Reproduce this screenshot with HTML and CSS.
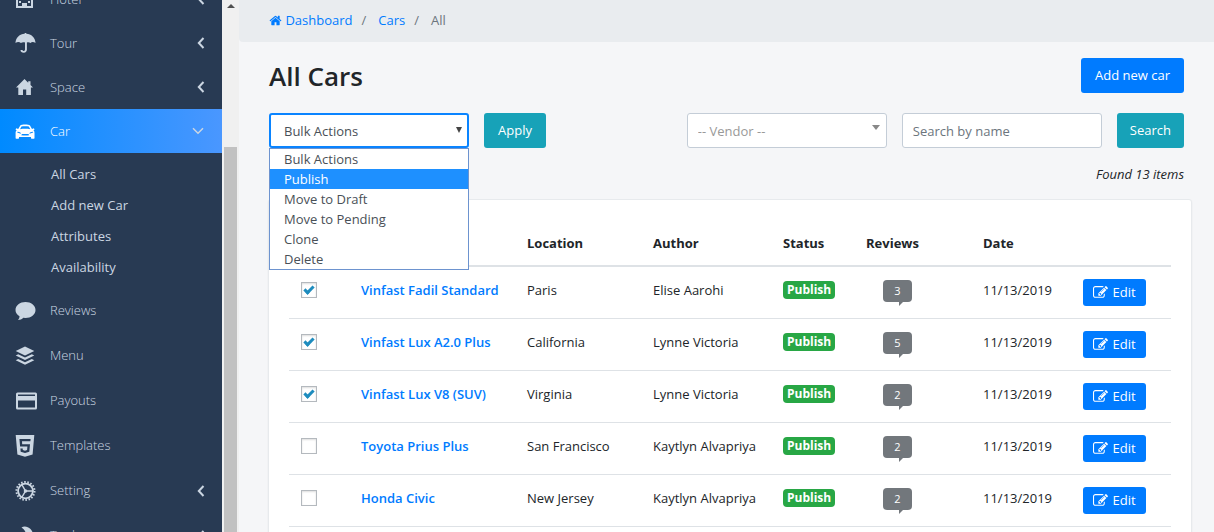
FILE: index.html
```html
<!DOCTYPE html>
<html lang="en">
<head>
<meta charset="utf-8">
<title>All Cars</title>
<link rel="stylesheet" href="styles.css">
</head>
<body>
<svg class="sprite" aria-hidden="true">
  <symbol id="home-fa" viewBox="0 0 1792 1792"><path d="M1472 992v480q0 26-19 45t-45 19h-384v-384h-256v384h-384q-26 0-45-19t-19-45v-480q0-1 .5-3t.5-3l575-474 575 474q1 2 1 6zm223-69l-62 74q-8 9-21 11h-3q-13 0-21-7l-692-577-692 577q-12 8-24 7-13-2-21-11l-62-74q-8-10-7-23.500t11-21.500l719-599q32-26 76-26t76 26l244 204v-195q0-14 9-23t23-9h192q14 0 23 9t9 23v408l219 182q10 8 11 21.500t-7 23.500z"/></symbol>
  <symbol id="edit" viewBox="0 0 1792 1792"><path d="M888 1184l116-116-152-152-116 116v56h96v96h56zm440-720q-16-16-33 1l-350 350q-17 17-1 33t33-1l350-350q17-17 1-33zm80 594v190q0 119-84.500 203.500t-203.500 84.500h-832q-119 0-203.500-84.500t-84.500-203.500v-832q0-119 84.500-203.500t203.500-84.500h832q63 0 117 25 15 7 18 23 3 17-9 29l-49 49q-14 14-32 8-23-6-45-6h-832q-66 0-113 47t-47 113v832q0 66 47 113t113 47h832q66 0 113-47t47-113v-126q0-13 9-22l64-64q15-15 35-7t20 29zm-96-738l288 288-672 672h-288v-288zm444 132l-92 92-288-288 92-92q28-28 68-28t68 28l152 152q28 28 28 68t-28 68z"/></symbol>
  <symbol id="left" viewBox="0 0 8 12"><path d="M6.500 1 1.800 6l4.700 5" fill="none" stroke="currentColor" stroke-width="2"/></symbol>
  <symbol id="down" viewBox="0 0 12 8"><path d="M1 1.300 6 6.300l5-5" fill="none" stroke="currentColor" stroke-width="1.500"/></symbol>
</svg>
<div class="app">
  <nav class="sidebar" aria-label="Main menu">
    <ul class="menu">
      <li><a class="item" href="#"><svg class="icon" viewBox="0 0 22 22"><path fill-rule="evenodd" d="M1 2h17v18H1zM3 4v14h4v-3h5v3h4V4zM4 6h2v2H4zm3 0h2v2H7zm3 0h2v2h-2zm3 0h2v2h-2zM4 9h2v2H4zm3 0h2v2H7zm3 0h2v2h-2zm3 0h2v2h-2zM4 13h2v2H4zm9 0h2v2h-2z"/></svg><span>Hotel</span><svg class="left"><use href="#left"/></svg></a></li>
      <li><a class="item" href="#"><svg class="icon" viewBox="0 0 22 22"><path d="M.5 11C.7 5.500 4.700 2 9.700 1.700V1h1.600v.7c5 .3 9 3.800 9.200 9.300-1.800-1.500-3.800-1.500-5 0-1-.9-2.200-1.100-3.600-.6v7.200c0 2-1.200 3.200-3.100 3.200-2 0-3.300-1.100-3.300-2.800h2c.1.700.6 1 1.300 1 .8 0 1.200-.5 1.200-1.400v-7.200c-1.600-.5-3-.3-4.100.6-1.400-1.500-3.700-1.500-5.400 0z"/></svg><span>Tour</span><svg class="left"><use href="#left"/></svg></a></li>
      <li><a class="item" href="#"><svg class="icon" viewBox="0 0 22 22"><path d="M9.500 3 1 11.500h2.300V19H8v-5.500h3.200V19h4.700v-7.500H18L15.500 9V5.200h-2.300v1.500z"/></svg><span>Space</span><svg class="left"><use href="#left"/></svg></a></li>
      <li>
        <a class="item current" href="#" aria-current="page"><svg class="icon" viewBox="0 0 22 22"><path fill-rule="evenodd" d="M5.300 5.400C6.500 4.300 13.500 4.300 15 5.400L17 9l1.800-.7.8 1.200-1.200.7c.9.800 1.100 1.400 1.100 3V18c0 .5-.2.7-.6.700h-2.200c-.5 0-.7-.3-.7-.8v-1H4v1c0 .5-.2.800-.7.800H1.200c-.4 0-.6-.2-.6-.7v-4.800c0-1.600.2-2.200 1.100-3L.5 9.500l.8-1.200L3.200 9zM5 9.200c3-.5 7-.5 10.300 0L13.800 6.500c-2-.5-5.500-.5-7.300 0zM2.200 12.500l3.600 1.200c.4-1.100-.7-1.800-3.300-2zm16 0-3.700 1.200c-.3-1.100.8-1.800 3.400-2zM6.200 15.200c2.500.5 5.500.5 8 0l-.8-1.200H7z"/></svg><span>Car</span><svg class="down"><use href="#down"/></svg></a>
        <ul class="submenu">
          <li><a href="#">All Cars</a></li>
          <li><a href="#">Add new Car</a></li>
          <li><a href="#">Attributes</a></li>
          <li><a href="#">Availability</a></li>
        </ul>
      </li>
      <li><a class="item tall" href="#"><svg class="icon" viewBox="0 0 22 22"><path d="M10.500 2C5 2 .5 5.500.5 10c0 2.700 1.500 4.800 4 6.300 0 1.500-.4 2.600-1.500 3.700 2 0 4-.7 5.300-2.200l2.200.2c5.500 0 10-3.500 10-8s-4.500-8-10-8z"/></svg><span>Reviews</span></a></li>
      <li><a class="item tall" href="#"><svg class="icon" viewBox="0 0 22 22"><path d="M10 1.500 19.300 6 10 10.500.7 6zM3.200 9.300l6.800 3.200 6.800-3.200 2.500 1.300L10 15 .7 10.600zm0 4.700 6.800 3.200 6.800-3.200 2.500 1.300-9.300 4.400-9.300-4.400z"/></svg><span>Menu</span></a></li>
      <li><a class="item tall" href="#"><svg class="icon" viewBox="0 0 22 22"><path fill-rule="evenodd" d="M2.500 2.500h18Q22 2.500 22 4v14q0 1.500-1.500 1.500h-18Q1 19.500 1 18V4q0-1.500 1.500-1.500zM3 4.500V6h17V4.500zM3 10.500v7h17v-7z"/></svg><span>Payouts</span></a></li>
      <li><a class="item tall" href="#"><svg class="icon" viewBox="0 0 22 22"><path fill-rule="evenodd" d="M.7 0h18.600l-1.700 19.500L10 21.700l-7.600-2.200zM4.400 4l.7 7.500h7.300l-.3 3.600-2.100.6-2.200-.6-.1-1.500H5.400l.3 3.200L10 18l4.300-1.200.7-7.500H7.200L7 6.300h8.400l.2-2.300z"/></svg><span>Templates</span></a></li>
      <li><a class="item tall" href="#"><svg class="icon" viewBox="0 0 22 22"><circle cx="10.500" cy="11" r="7.400" fill="none" stroke="currentColor" stroke-width="1.800"/><circle cx="10.500" cy="11" r="9" fill="none" stroke="currentColor" stroke-width="2" stroke-dasharray="1.570 1.570"/><path d="M10.500 11h8M10.500 11l-4-7M10.500 11l-4 7" stroke="currentColor" stroke-width="1.500"/><circle cx="10.500" cy="11" r="1.800"/></svg><span>Setting</span><svg class="left"><use href="#left"/></svg></a></li>
      <li><a class="item tall" href="#"><svg class="icon" viewBox="0 0 22 22"><path d="M6.500 2.500C9 .8 13 1.500 15.500 4c2.500 2.500 3 6 2.500 9l2 2-5 5-4-6c1-4 0-8.500-4.500-11.500z"/></svg><span>Tools</span><svg class="left"><use href="#left"/></svg></a></li>
    </ul>
  </nav>
  <div class="scrollbar" aria-hidden="true"><span class="arrow"></span><span class="thumb"></span></div>
  <main class="main">
    <nav class="breadcrumb" aria-label="Breadcrumb">
      <a href="#"><svg class="home"><use href="#home-fa"/></svg> Dashboard</a><span class="sep">/</span><a href="#">Cars</a><span class="sep">/</span><span>All</span>
    </nav>
    <div class="content">
      <header class="bar title-bar">
        <h1>All Cars</h1>
        <button class="btn primary" type="button">Add new car</button>
      </header>
      <div class="bar">
        <form class="group">
          <div class="select-wrap">
            <select class="field bulk" aria-label="Bulk actions"><option>Bulk Actions</option></select>
            <ul class="options" role="listbox" aria-label="Actions">
              <li role="option">Bulk Actions</li>
              <li role="option" class="active" aria-selected="true">Publish</li>
              <li role="option">Move to Draft</li>
              <li role="option">Move to Pending</li>
              <li role="option">Clone</li>
              <li role="option">Delete</li>
            </ul>
          </div>
          <button class="btn info" type="button">Apply</button>
        </form>
        <form class="group">
          <div class="select-wrap vendor-wrap">
            <select class="field vendor" aria-label="Vendor"><option>-- Vendor --</option></select>
          </div>
          <input class="field" type="text" placeholder="Search by name" aria-label="Search by name">
          <button class="btn info" type="button">Search</button>
        </form>
      </div>
      <p class="found">Found 13 items</p>
      <section class="card">
        <table>
          <colgroup><col class="c-check"><col><col class="c-loc"><col class="c-author"><col class="c-status"><col class="c-reviews"><col class="c-date"><col class="c-edit"></colgroup>
          <thead><tr><td></td><td></td><th scope="col">Location</th><th scope="col">Author</th><th scope="col">Status</th><th scope="col">Reviews</th><th scope="col">Date</th><td></td></tr></thead>
          <tbody>
            <tr><td><input type="checkbox" aria-label="Select Vinfast Fadil Standard" checked></td><td><a class="name" href="#">Vinfast Fadil Standard</a></td><td>Paris</td><td>Elise Aarohi</td><td><span class="badge">Publish</span></td><td><span class="bubble">3</span></td><td>11/13/2019</td><td><a class="btn primary small" href="#"><svg class="edit"><use href="#edit"/></svg>Edit</a></td></tr>
            <tr><td><input type="checkbox" aria-label="Select Vinfast Lux A2.0 Plus" checked></td><td><a class="name" href="#">Vinfast Lux A2.0 Plus</a></td><td>California</td><td>Lynne Victoria</td><td><span class="badge">Publish</span></td><td><span class="bubble">5</span></td><td>11/13/2019</td><td><a class="btn primary small" href="#"><svg class="edit"><use href="#edit"/></svg>Edit</a></td></tr>
            <tr><td><input type="checkbox" aria-label="Select Vinfast Lux V8 (SUV)" checked></td><td><a class="name" href="#">Vinfast Lux V8 (SUV)</a></td><td>Virginia</td><td>Lynne Victoria</td><td><span class="badge">Publish</span></td><td><span class="bubble">2</span></td><td>11/13/2019</td><td><a class="btn primary small" href="#"><svg class="edit"><use href="#edit"/></svg>Edit</a></td></tr>
            <tr><td><input type="checkbox" aria-label="Select Toyota Prius Plus"></td><td><a class="name" href="#">Toyota Prius Plus</a></td><td>San Francisco</td><td>Kaytlyn Alvapriya</td><td><span class="badge">Publish</span></td><td><span class="bubble">2</span></td><td>11/13/2019</td><td><a class="btn primary small" href="#"><svg class="edit"><use href="#edit"/></svg>Edit</a></td></tr>
            <tr><td><input type="checkbox" aria-label="Select Honda Civic"></td><td><a class="name" href="#">Honda Civic</a></td><td>New Jersey</td><td>Kaytlyn Alvapriya</td><td><span class="badge">Publish</span></td><td><span class="bubble">2</span></td><td>11/13/2019</td><td><a class="btn primary small" href="#"><svg class="edit"><use href="#edit"/></svg>Edit</a></td></tr>
          </tbody>
        </table>
      </section>
    </div>
  </main>
</div>
</body>
</html>
```
FILE: styles.css
```css
*, *::before { box-sizing: border-box; }
body {
  margin: 0;
  background: #f5f6f8;
  color: #212529;
  font: 13px/21px "Open Sans", "Noto Sans", sans-serif;
}
a { color: #007bff; text-decoration: none; }
ul { list-style: none; margin: 0; padding: 0; }
button, input, select { font: inherit; }
svg { fill: currentColor; flex: none; }
.sprite { position: absolute; width: 0; height: 0; }

.app { display: flex; height: 100vh; overflow: hidden; }

.sidebar { flex: 0 0 222px; overflow: hidden; background: #283a53; }
.menu { margin-top: -23px; }
.item {
  display: flex;
  align-items: center;
  height: 44px;
  padding: 0 17px 0 15px;
  color: #cbd6e2;
  font-weight: 300;
}
.item.tall { height: 45px; }
.item span { flex: 1; }
.item.current { color: #fff; background: linear-gradient(90deg, #008aff, #4a97ff); }
.icon { width: 22px; height: 22px; margin-right: 13px; overflow: visible; }
.left { width: 8px; height: 12px; }
.down { width: 12px; height: 8px; margin-right: 1px; color: #cbd6e2; }
.submenu { padding: 6px 0 5px 51px; }
.submenu a { display: block; line-height: 31px; color: #cbd6e2; }

.scrollbar {
  display: flex;
  flex: 0 0 17px;
  flex-direction: column;
  align-items: center;
  padding-top: 4px;
  background: #f0f0f0;
}
.arrow { border: 4px solid transparent; border-top: 0; border-bottom: 4px solid #505050; }
.thumb { flex: 1; width: 13px; margin-top: 139px; background: #c1c1c1; }

.main { flex: 1; min-width: 0; }
.breadcrumb {
  display: flex;
  height: 42px;
  padding: 10px 30px;
  border-bottom-left-radius: 4px;
  background: #e9ecef;
  color: #6c757d;
}
.breadcrumb .sep { margin: 0 12px 0 9px; }
.home { width: 13px; height: 13px; vertical-align: -2px; }

.content { padding: 16px 22px 0 29px; }
.bar { display: flex; justify-content: space-between; padding: 0 8px 0 1px; }
.title-bar { align-items: flex-start; margin-bottom: 20px; }
h1 { margin: 0; font-size: 26px; line-height: 36px; font-weight: 600; }
.title-bar { height: 35px; }
.group { display: flex; gap: 15px; }

.btn {
  display: flex;
  align-items: center;
  height: 35px;
  padding: 0 13px;
  border: 0;
  border-radius: 3px;
  color: #fff;
}
.primary { background: #007bff; }
.title-bar .btn { padding: 0 14px; }
.info { background: #17a2b8; }
.group .btn { min-width: 62px; justify-content: center; }
.small { width: 63px; height: 27px; padding: 0; gap: 4px; justify-content: center; }
.edit { width: 15px; height: 15px; }

.select-wrap { position: relative; }
.field {
  display: block;
  width: 200px;
  height: 35px;
  padding: 0 10px;
  border: 1px solid #c4cdd7;
  border-radius: 3px;
  background: #fff;
  color: #495057;
  appearance: none;
}
.field::placeholder { color: #6c757d; opacity: 1; }
.bulk { padding: 1px 13px 0; border: 2px solid #0a84ff; outline: 0; }
.vendor { padding-top: 2px; color: #999; }
.select-wrap::after {
  content: "";
  position: absolute;
  top: 14px;
  right: 7px;
  border: 3px solid transparent;
  border-top: 6px solid #444;
  border-bottom: 0;
}
.vendor-wrap::after { top: 12px; border-width: 5px 4px 0; border-top-color: #888; }
.options {
  position: absolute;
  top: 35px;
  left: 0;
  z-index: 2;
  width: 200px;
  border: 1px solid #6d93cf;
  background: #fff;
  color: #495057;
}
.options li { padding: 0 14px; line-height: 20px; }
.options .active { background: #1e90ff; color: #fff; }

.found { margin: 16px 8px 14px 0; text-align: right; font-style: italic; }

.card {
  padding: 20px;
  border: 1px solid #e7eaed;
  border-radius: 3px;
  background: #fff;
  box-shadow: 0 1px 2px #0001;
}
table { width: 100%; table-layout: fixed; border-collapse: separate; border-spacing: 0; }
th, td {
  padding: 12px 0 10px 12px;
  line-height: 23px;
  text-align: left;
  vertical-align: top;
  white-space: nowrap;
}
thead th, thead td { border-bottom: 2px solid #dee2e6; font-weight: 700; }
tbody td { height: 52px; border-bottom: 1px solid #dee2e6; }
.c-check { width: 60px; }
.c-loc { width: 126px; }
.c-author { width: 130px; }
.c-status { width: 83px; }
.c-reviews { width: 117px; }
.c-date, .c-edit { width: 100px; }
.name { font-weight: 600; }
input[type="checkbox"] {
  display: block;
  width: 16px;
  height: 16px;
  margin: 3px 0 0;
  border: 1px solid #b4b9be;
  background: #fff;
  box-shadow: inset 0 1px 2px #0002;
  appearance: none;
}
input[type="checkbox"]:checked::before {
  content: "";
  display: block;
  width: 10px;
  height: 6px;
  margin: 3px 0 0 2px;
  border: solid #1e8cbe;
  border-width: 0 0 3px 3px;
  transform: rotate(-45deg);
}
.badge {
  display: block;
  width: fit-content;
  margin-top: 2px;
  padding: 0 4px;
  border-radius: 4px;
  background: #28a745;
  color: #fff;
  font-size: 12px;
  line-height: 18px;
  font-weight: 700;
}
.bubble {
  position: relative;
  display: block;
  width: 29px;
  margin: 1px 0 0 17px;
  border-radius: 4px;
  background: #72777c;
  color: #fff;
  font-size: 11px;
  line-height: 22px;
  text-align: center;
}
.bubble::after {
  content: "";
  position: absolute;
  top: 22px;
  left: 16px;
  border-top: 4px solid #72777c;
  border-right: 4px solid transparent;
}
```
